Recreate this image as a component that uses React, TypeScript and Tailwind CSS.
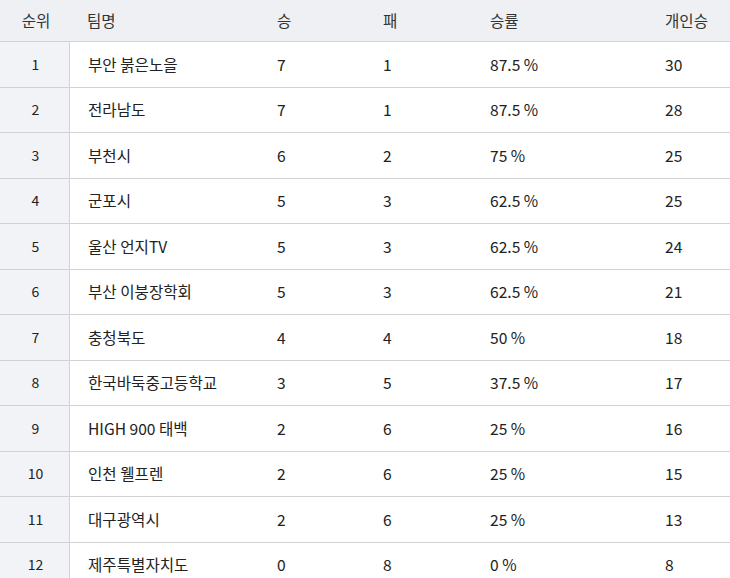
import React from "react";

const rows: [string, string, string, string, string, string][] = [
  ["1", "부안 붉은노을", "7", "1", "87.5 %", "30"],
  ["2", "전라남도", "7", "1", "87.5 %", "28"],
  ["3", "부천시", "6", "2", "75 %", "25"],
  ["4", "군포시", "5", "3", "62.5 %", "25"],
  ["5", "울산 언지TV", "5", "3", "62.5 %", "24"],
  ["6", "부산 이붕장학회", "5", "3", "62.5 %", "21"],
  ["7", "충청북도", "4", "4", "50 %", "18"],
  ["8", "한국바둑중고등학교", "3", "5", "37.5 %", "17"],
  ["9", "HIGH 900 태백", "2", "6", "25 %", "16"],
  ["10", "인천 웰프렌", "2", "6", "25 %", "15"],
  ["11", "대구광역시", "2", "6", "25 %", "13"],
  ["12", "제주특별자치도", "0", "8", "0 %", "8"],
];

export default function App() {
  return (
    <div
      className="w-[730px] h-[578px] overflow-hidden bg-white text-[15.6px] text-[#222]"
      style={{ fontFamily: '"Noto Sans CJK KR", "Noto Sans", sans-serif' }}
    >
      <div className="flex h-[42px] items-center bg-[#eef0f4] border-b border-[#d2d2d2] text-[#333]">
        <div className="w-[70px] pl-[2px] text-center">순위</div>
        <div className="w-[191px] pl-[17px]">팀명</div>
        <div className="w-[106px] pl-[16px]">승</div>
        <div className="w-[107px] pl-[16px]">패</div>
        <div className="w-[175px] pl-[16px]">승률</div>
        <div className="flex-1 pl-[16px]">개인승</div>
      </div>
      {rows.map((r) => (
        <div key={r[0]} className="flex h-[45.5px] border-b border-[#d2d2d2]">
          <div className="w-[70px] pl-[2px] flex items-center justify-center bg-[#f2f3f7] border-r border-[#d2d2d2] text-[14px]">
            {r[0]}
          </div>
          <div className="w-[191px] pl-[18px] flex items-center">{r[1]}</div>
          <div className="w-[106px] pl-[16px] flex items-center">{r[2]}</div>
          <div className="w-[107px] pl-[16px] flex items-center">{r[3]}</div>
          <div className="w-[175px] pl-[16px] flex items-center">{r[4]}</div>
          <div className="flex-1 pl-[16px] flex items-center">{r[5]}</div>
        </div>
      ))}
    </div>
  );
}
